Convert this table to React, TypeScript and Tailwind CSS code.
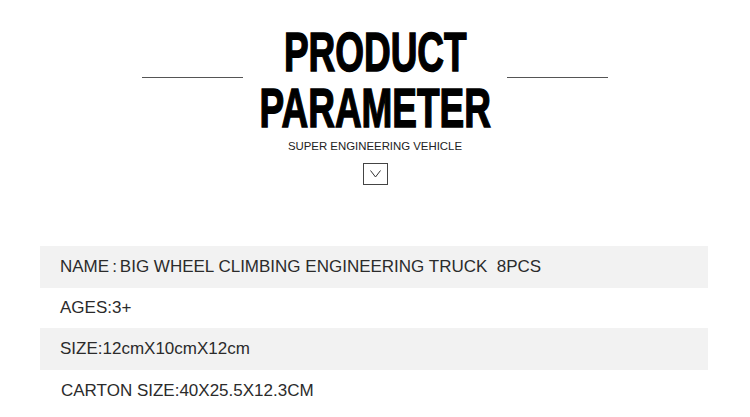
const rows = [
  { label: "NAME", sep: true, value: "BIG WHEEL CLIMBING ENGINEERING TRUCK\u00a0 8PCS", shaded: true, h: "h-[42px]" },
  { label: "AGES:3+", sep: false, value: "", shaded: false, h: "h-[40px]" },
  { label: "SIZE:12cmX10cmX12cm", sep: false, value: "", shaded: true, h: "h-[42px]" },
  { label: "CARTON SIZE:40X25.5X12.3CM", sep: false, value: "", shaded: false, h: "h-[42px]", nudge: true },
];

function Chevron() {
  return (
    <svg width="11" height="8" viewBox="0 0 11 8" fill="none">
      <path d="M0.5 0.5 L5.5 7 L10.5 0.5" stroke="#333" strokeWidth="1" />
    </svg>
  );
}

export default function App() {
  return (
    <div className="w-[750px] h-[417px] bg-white overflow-hidden font-['Liberation_Sans',Arial,sans-serif]">
      {/* heading */}
      <div className="flex justify-center pt-[24px]">
        <div className="w-[101px] h-px bg-[#555] mt-[53px]" />
        <div className="w-[264px] flex justify-center">
          <h1 className="font-bold text-black text-center text-[56px] leading-[56px] scale-x-[0.66] [-webkit-text-stroke:1.5px_black] whitespace-pre">
            {"PRODUCT\nPARAMETER"}
          </h1>
        </div>
        <div className="w-[101px] h-px bg-[#555] mt-[53px]" />
      </div>

      <div className="flex flex-col items-center">
        <div className="mt-[2px] text-[11.4px] leading-[16px] text-[#222] whitespace-nowrap">SUPER ENGINEERING VEHICLE</div>
        <div className="mt-[9px] w-[25px] h-[22px] border border-[#444] flex items-center justify-center">
          <Chevron />
        </div>
      </div>

      {/* parameters */}
      <div className="mt-[61px] mx-[40px] w-[668px]">
        {rows.map((r) => (
          <div
            key={r.label}
            className={`${r.h} flex items-center ${r.nudge ? "pl-[21px]" : "pl-[20px]"} text-[17px] text-[#2b2b2b] whitespace-nowrap ${
              r.shaded ? "bg-[#f2f2f2]" : "bg-white"
            }`}
          >
            {r.sep ? (
              <>
                {r.label}
                <span className="mx-[3px]">:</span>
                {r.value}
              </>
            ) : (
              r.label
            )}
          </div>
        ))}
      </div>
    </div>
  );
}
